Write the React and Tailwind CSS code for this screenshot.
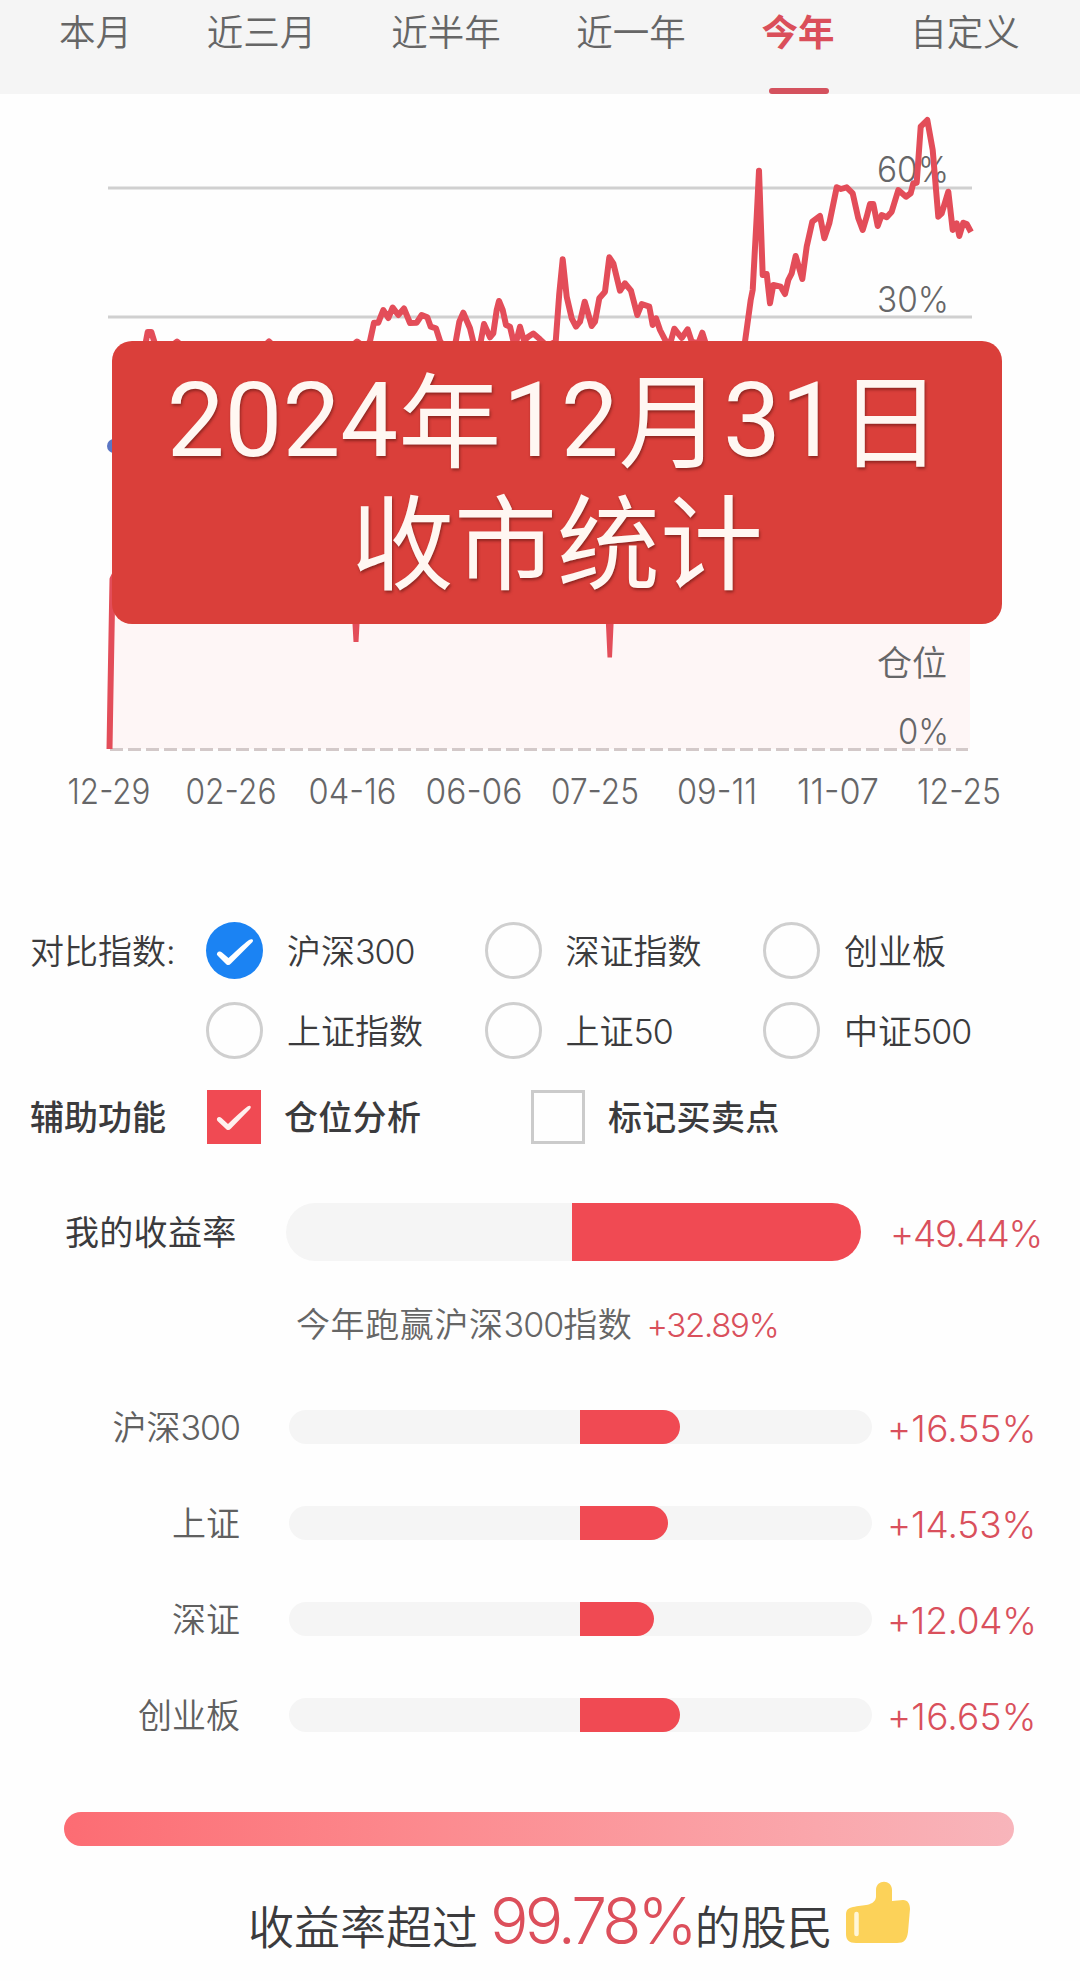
import React from 'react';

const tabs = [
  { label: '本月', width: 'w-[73px]', gap: 'ml-[59px]' },
  { label: '近三月', width: 'w-[109px]', gap: 'ml-[75px]' },
  { label: '近半年', width: 'w-[110px]', gap: 'ml-[75px]' },
  { label: '近一年', width: 'w-[110px]', gap: 'ml-[75px]' },
  { label: '今年', width: 'w-[72px]', gap: 'ml-[76px]', active: true },
  { label: '自定义', width: 'w-[110px]', gap: 'ml-[76px]' },
];

const seriesLine =
  'M109.5 749 L110.5 690 L112.5 579 L122 560 L130 400 L141 360 L146 341 L147.7 332 L151.3 332 L155 344 L166 350 L177 341.5 L190 352 L258 352 L269 341.5 L280 352 L345 352 L357 341.5 L366 348 L370 341 L374 322.7 L378.3 322.7 L383.3 310 L388.3 318 L392.7 307.5 L398.3 315 L404 308.5 L410 323 L416.7 322.7 L421.7 315 L427.3 317.3 L430.7 326.7 L436 328.3 L440 341 L448 352 L455.7 341.7 L459.3 321.7 L463.3 312.7 L470 328.3 L473.3 341.7 L478 352 L480.7 341.7 L484 324 L490 337.3 L493.3 333.3 L496.7 310 L499 301 L502.7 310 L506 325 L510 326.7 L513.3 340.7 L516.7 340 L520 326.7 L524 340.7 L528.3 336.7 L533.3 333.5 L540 339.3 L547 346 L555.7 341.7 L559.3 293.3 L562.7 259.3 L566.7 296.7 L571.7 318.3 L576 326.7 L580 321.7 L584.7 301.7 L591.7 326 L595 321.7 L599.3 298.3 L605 291.7 L609.3 257.3 L613.3 263.3 L620 290.7 L625 283.3 L631 290.7 L637.3 315 L641.7 304 L649.3 306.7 L652.7 325 L656 318.3 L660 330 L666 341.7 L670.7 341.7 L674.3 328.7 L681.7 338 L687.7 329.3 L691.7 341.7 L698.3 343.3 L702.3 332.7 L705.7 343.3 L718 360 L736 358 L745 341.7 L750.7 300 L752.7 290 L756.7 216.7 L759 170.7 L762.7 275 L766.7 274 L770 303.3 L773.3 285 L780.7 286.7 L785 294 L788.3 280 L791.7 273.3 L795.7 256 L802.3 279 L806.7 246.7 L812.3 221.7 L820 216 L824.3 238.3 L829.3 223.3 L836.7 187.3 L841 189 L846.7 187.3 L852.7 193.3 L858.3 218.3 L862.7 230 L866.7 216.7 L870 204 L873.3 204 L877.7 226 L881.7 215 L886.7 217.3 L891.7 211.7 L898.3 190 L906 196.7 L910.7 193.3 L913.3 183.3 L916.7 182.7 L920.7 126.7 L927.3 120 L932.7 150 L938.3 216.7 L941.7 213.3 L948.3 191.7 L952.7 230 L956.7 223.3 L959.3 236 L963.3 222.7 L966.7 224 L971 232';

const dates = [
  ['12-29', 109, 81], ['02-26', 231, 89], ['04-16', 352.5, 86], ['06-06', 474, 95],
  ['07-25', 595, 86], ['09-11', 717, 78], ['11-07', 838, 80], ['12-25', 959, 82],
];

function Chart() {
  return (
    <svg className="block h-[756px] w-[1080px]" viewBox="0 94 1080 756" fill="none">
      <rect x="110" y="560" width="860" height="189" fill="#fef6f6" />
      <path d="M108 188H972M108 317H972" stroke="#d0d0d0" strokeWidth="3" />
      <path d="M110 749.500H968" stroke="#d3c9c9" strokeWidth="3.200" strokeDasharray="13 5" />
      <g fill="#666668" fontSize="35" fontWeight="350">
        <text x="877" y="181.500" textLength="72" lengthAdjust="spacingAndGlyphs">60%</text>
        <text x="877" y="312" textLength="72" lengthAdjust="spacingAndGlyphs">30%</text>
        <text x="877" y="676" fontSize="35">仓位</text>
        <text x="898" y="744" textLength="51" lengthAdjust="spacingAndGlyphs">0%</text>
        {dates.map(([d, x, w]) => (
          <text key={d} x={x - w / 2 - 1} y="804" textLength={w + 2} lengthAdjust="spacingAndGlyphs">{d}</text>
        ))}
      </g>
      <circle cx="114" cy="446" r="7" fill="#5b76c4" />
      <path d={seriesLine} stroke="#e34d59" strokeWidth="6" strokeLinejoin="round" />
      <path d="M352 615L353.500 642H358.500L360 615ZM605.500 615L607.500 657.500H612L614 615Z" fill="#e34d59" />
    </svg>
  );
}

function Radio({ checked }) {
  if (checked) {
    return (
      <span className="flex size-[57px] shrink-0 items-center justify-center rounded-full bg-[#1b83f3]">
        <svg className="size-[57px]" viewBox="0 0 57 57" fill="none">
          <path d="M11 31.500C12 29 14.500 29 16 30.500L22.500 36C28 31 37 22.500 43 18C46 16 48.500 18 46 20.500L25 41.500C23 43.500 21.500 43.500 19.500 41.500L12 34C11 33 10.700 32.500 11 31.500Z" fill="#fff" />
        </svg>
      </span>
    );
  }
  return <span className="size-[57px] shrink-0 rounded-full border-[3px] border-[#cfcfcf]" />;
}

function Option({ label, checked }) {
  return (
    <div className="flex w-[278.5px] items-center">
      <Radio checked={checked} />
      <span className="ml-6 whitespace-nowrap pt-[2px]">{label}</span>
    </div>
  );
}

const Num = ({ children }) => <span className="tracking-[-1px]">{children}</span>;
const Han = ({ children }) => <span className="align-[-4px] tracking-[1.5px]">{children}</span>;

const rows = [
  { label: <>沪深<Num>300</Num></>, value: '+16.55%', width: 100, track: 'tracking-[0.2px]' },
  { label: '上证', value: '+14.53%', width: 88, track: 'tracking-[-0.1px]' },
  { label: '深证', value: '+12.04%', width: 74, track: 'tracking-[-0.3px]' },
  { label: '创业板', value: '+16.65%', width: 100, track: 'tracking-[0.2px]' },
];

export default function App() {
  return (
    <div className="h-[1981px] w-[1080px] overflow-hidden bg-[#fefefe] font-['Inter','Noto_Sans_CJK_SC',sans-serif] text-[34px] leading-none text-[#3b3b3d]">
      <nav className="flex h-[94px] bg-[#f5f5f5] text-[36.5px] text-[#666]">
        {tabs.map((t) => (
          <div key={t.label} className={`${t.gap} ${t.width} flex shrink-0 flex-col items-center justify-between whitespace-nowrap pt-[15px]`}>
            <span className={t.active ? 'font-bold text-[#da4f5a]' : 'font-[350]'}>{t.label}</span>
            {t.active && <span className="ml-px h-[6px] w-[60px] rounded-[3px] bg-[#d4525e]" />}
          </div>
        ))}
      </nav>

      <section className="relative">
        <Chart />
        <div className="absolute left-[112px] top-[247px] flex h-[283px] w-[890px] flex-col items-center rounded-[20px] bg-[#da3f3a] pt-[20px] font-['Roboto','Noto_Sans_CJK_SC',sans-serif] text-[103px] leading-[120px] text-[#fff7f2] [text-shadow:1px_2px_3px_rgba(90,20,15,0.6)]">
          <span className="-ml-[4px] h-[122px] whitespace-nowrap">
            2024<Han>年</Han>12<Han>月</Han>31<Han>日</Han>
          </span>
          <span className="whitespace-nowrap pt-[4px]">收市统计</span>
        </div>
      </section>

      <section className="pl-[30px]">
        <div className="flex pt-[72px]">
          <span className="w-[176px] pt-[13px] font-[350]">对比指数:</span>
          <div className="flex flex-col gap-[23px] font-[350]">
            <div className="flex">
              <Option checked label={<>沪深<Num>300</Num></>} />
              <Option label="深证指数" />
              <Option label="创业板" />
            </div>
            <div className="flex">
              <Option label="上证指数" />
              <Option label={<>上证<Num>50</Num></>} />
              <Option label={<>中证<Num>500</Num></>} />
            </div>
          </div>
        </div>
        <div className="mt-[31px] flex h-[54px] items-center font-medium">
          <span className="w-[177px] pt-[2px]">辅助功能</span>
          <span className="size-[54px] bg-[#f04a53]">
            <svg className="size-[54px]" viewBox="0 0 54 54" fill="none">
              <path d="M10 28.500C11 26.500 13 26.500 14.500 28L21 34C27 28 36 20 40.500 16.500C43 14.500 45 16.500 43 19L24 38.500C22 40.500 20.500 40.500 18.500 38.500L11 31.500C10 30.500 9.700 29.500 10 28.500Z" fill="#fff0ee" />
            </svg>
          </span>
          <span className="ml-[23px] w-[247px] pt-[2px] tracking-[0.3px]">仓位分析</span>
          <span className="size-[54px] border-[3px] border-[#cbcbcb]" />
          <span className="ml-[23px] pt-[2px] tracking-[0.3px]">标记买卖点</span>
        </div>
      </section>

      <section>
        <div className="mt-[59px] flex h-[58px] items-center">
          <span className="ml-[65px] w-[221px] pt-[2px] tracking-[0.3px]">我的收益率</span>
          <div className="flex h-[58px] w-[575px] justify-end overflow-hidden rounded-full bg-[#f5f5f5]">
            <div className="w-[289px] bg-[#f04a53]" />
          </div>
          <span className="ml-[29px] pt-[2px] text-[37px] font-[350] tracking-[-1.2px] text-[#d9505c]">+49.44%</span>
        </div>
        <div className="mt-[46px] flex h-[36px] items-center pl-[296px] font-[350] text-[#666]">
          <span className="whitespace-nowrap tracking-[0.6px]">今年跑赢沪深<Num>300</Num>指数</span>
          <span className="ml-[14px] text-[33px] tracking-[-1.3px] text-[#d9505c]">+32.89%</span>
        </div>
        <div className="mt-[67px] flex flex-col gap-[62px]">
          {rows.map((r) => (
            <div key={r.value} className="flex h-[34px] items-center">
              <span className="w-[240px] pt-[2px] text-right font-[350] text-[#606060]">{r.label}</span>
              <div className="ml-[49px] h-[34px] w-[583px] rounded-full bg-[#f5f5f5]">
                <div className="ml-[291px] h-full rounded-r-[17px] bg-[#f04a53]" style={{ width: r.width }} />
              </div>
              <span className={`${r.track} ml-[15px] pt-[2px] text-[37px] font-[350] text-[#d9505c]`}>{r.value}</span>
            </div>
          ))}
        </div>
      </section>

      <section>
        <div className="ml-[64px] mt-[80px] h-[34px] w-[950px] rounded-full bg-linear-to-r from-[#fc6c73] to-[#f8b5bb]" />
        <div className="ml-[248px] mt-[35px] flex h-[70px] items-baseline text-[46px] font-[350]">
          <span className="whitespace-nowrap">收益率超过</span>
          <span className="ml-[12px] text-[64px] leading-[70px] tracking-[-3.8px] text-[#dc4f5b]">99.78%</span>
          <span className="ml-px whitespace-nowrap">的股民</span>
          <svg className="ml-[13px] h-[63px] w-[64px]" viewBox="0 0 64 63">
            <path d="M7 26C17 24 29 25 30 16V9C30 -2 46 -2 46 9V20L57 19C62 19 64 23 64 28L62 51C61 59 58 62 51 62H10C3 62 0 59 0 53V34C0 29 2 27 7 26Z" fill="#fcd259" />
            <path d="M10.500 33V53" stroke="#fff6d8" strokeWidth="4.500" strokeLinecap="round" />
          </svg>
        </div>
      </section>
    </div>
  );
}
